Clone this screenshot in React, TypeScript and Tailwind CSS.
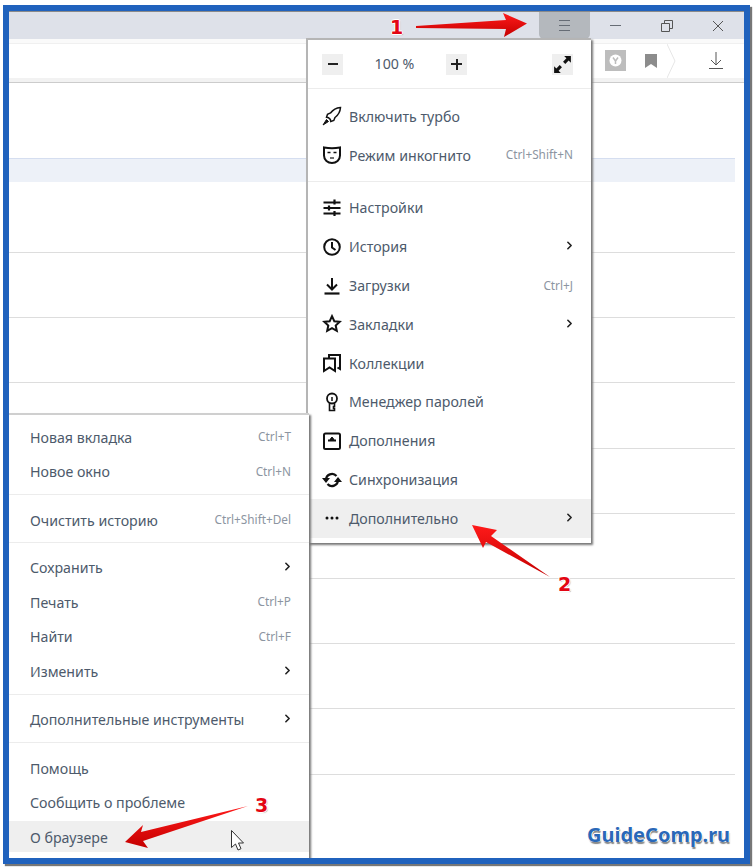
import { ChevronRight } from "lucide-react";
import type { ReactNode } from "react";

type IconProps = { children: ReactNode };

function MenuIcon({ children }: IconProps) {
  return (
    <svg width="20" height="20" viewBox="0 0 20 20" fill="none" stroke="#111" strokeWidth="2" className="shrink-0">
      {children}
    </svg>
  );
}

const mainGroupOne = [
  {
    label: "Включить турбо",
    icon: (
      <MenuIcon>
        <path d="M18.500 1.500c-4 .4-7.500 2.200-10 5.500l-3 1.200-1 3 2 .5 1.800 1.800.5 2 3-1 1.200-3c3.300-2.500 5.200-6 5.500-10z" strokeWidth="1.500" />
        <path d="M4.500 13.500 1 19l5.500-3.500z" fill="#111" strokeWidth="1" />
      </MenuIcon>
    ),
  },
  {
    label: "Режим инкогнито",
    shortcut: "Ctrl+Shift+N",
    icon: (
      <MenuIcon>
        <path d="M2 2.500c5 1 11 1 16 0v8c0 4.500-3.800 7.500-8 7.500s-8-3-8-7.500z" />
        <path d="M5.500 7.500h3M11.500 7.500h3" strokeWidth="1.600" />
        <path d="M8 13h4" strokeWidth="1.200" />
      </MenuIcon>
    ),
  },
];

const mainGroupTwo = [
  {
    label: "Настройки",
    icon: (
      <MenuIcon>
        <path d="M1.500 4.500h17M1.500 10h17M1.500 15.500h17" strokeWidth="1.800" />
        <path d="M12.500 1.500v5M7 7.500v5M12.500 13v5" strokeWidth="2.200" />
      </MenuIcon>
    ),
  },
  {
    label: "История",
    chevron: true,
    icon: (
      <MenuIcon>
        <circle cx="10" cy="10" r="7.800" />
        <path d="M10 5v5.500l3.500 2.500" />
      </MenuIcon>
    ),
  },
  {
    label: "Загрузки",
    shortcut: "Ctrl+J",
    icon: (
      <MenuIcon>
        <path d="M10 2v11M5 8.500l5 5 5-5" />
        <path d="M2.500 17.500h15" strokeWidth="2.200" />
      </MenuIcon>
    ),
  },
  {
    label: "Закладки",
    chevron: true,
    icon: (
      <MenuIcon>
        <path d="m10 2.200 2.300 5 5.400.6-4 3.700 1.100 5.400L10 14.200l-4.800 2.700 1.100-5.400-4-3.700 5.400-.6z" />
      </MenuIcon>
    ),
  },
  {
    label: "Коллекции",
    icon: (
      <MenuIcon>
        <path d="M7 5V2h11v14l-2.500-1.500" strokeWidth="2" />
        <path d="M2 5.500h11V18l-5.500-3.500L2 18z" strokeWidth="2" />
      </MenuIcon>
    ),
  },
  {
    label: "Менеджер паролей",
    icon: (
      <MenuIcon>
        <circle cx="10" cy="6.500" r="5" strokeWidth="1.800" />
        <path d="M7.500 11v7.500h5v-2h-1v-2h1V11" strokeWidth="1.600" />
        <path d="M10 5v4" strokeWidth="1.500" />
      </MenuIcon>
    ),
  },
  {
    label: "Дополнения",
    icon: (
      <MenuIcon>
        <rect x="2" y="2.500" width="16" height="15.500" rx="1.500" />
        <path d="M6 9.500h8" strokeWidth="2" />
        <path d="M8 8.500 10 6l2 2.500z" fill="#111" strokeWidth="1" />
      </MenuIcon>
    ),
  },
  {
    label: "Синхронизация",
    icon: (
      <MenuIcon>
        <path d="M4 10a6 6 0 0 1 10.500-4M16 10a6 6 0 0 1-10.500 4" strokeWidth="2.200" />
        <path d="M0 8h8l-4 5zM20 12h-8l4-5z" fill="#111" stroke="none" />
      </MenuIcon>
    ),
  },
  {
    label: "Дополнительно",
    chevron: true,
    active: true,
    icon: (
      <MenuIcon>
        <circle cx="5" cy="10" r="1.500" fill="#111" stroke="none" />
        <circle cx="10" cy="10" r="1.500" fill="#111" stroke="none" />
        <circle cx="15" cy="10" r="1.500" fill="#111" stroke="none" />
      </MenuIcon>
    ),
  },
];

type MainRowProps = {
  label: string;
  icon: ReactNode;
  shortcut?: string;
  chevron?: boolean;
  active?: boolean;
};

function MainRow({ label, icon, shortcut, chevron, active }: MainRowProps) {
  return (
    <div className={`flex h-[38.8px] items-center pl-[14px] pr-[18px] ${active ? "bg-[#efefef]" : ""}`}>
      {icon}
      <span className="ml-[7px] flex-1 text-[14.2px] text-[#4d5a6b]">{label}</span>
      {shortcut && <span className="text-[11.8px] text-[#8c95a1]">{shortcut}</span>}
      {chevron && <ChevronRight size={13} strokeWidth={3} className="-mr-[3px] mb-[2px] text-[#222]" />}
    </div>
  );
}

type LeftRowProps = {
  label: string;
  shortcut?: string;
  chevron?: boolean;
};

function LeftRow({ label, shortcut, chevron }: LeftRowProps) {
  return (
    <div className="flex h-[34.500px] items-center pl-[21px] pr-[18px]">
      <span className="flex-1 text-[14.2px] text-[#4d5a6b]">{label}</span>
      {shortcut && <span className="text-[11.8px] text-[#8c95a1]">{shortcut}</span>}
      {chevron && <ChevronRight size={13} strokeWidth={3} className="-mr-[3px] mb-[2px] text-[#222]" />}
    </div>
  );
}

function ContentRows() {
  const rows = [0, 1, 2, 3, 4, 5, 6, 7, 8];
  return (
    <div className="flex-1 bg-white pr-[9px]">
      <div className="h-[75px]" />
      <div className="h-[24px] border-t border-[#d5def0] bg-[#edf1f8]" />
      <div className="h-[70px]" />
      {rows.map((row) => (
        <div key={row} className="h-[65.200px] border-t border-[#dddddd]" />
      ))}
    </div>
  );
}

function Annotations() {
  return (
    <svg width="755" height="868" viewBox="0 0 755 868" className="pointer-events-none absolute left-0 top-0">
      <defs>
        <linearGradient id="arrow-red" x1="0" y1="0" x2="0" y2="1">
          <stop offset="0" stopColor="#ff1a1a" />
          <stop offset="1" stopColor="#c40000" />
        </linearGradient>
      </defs>
      <g fill="url(#arrow-red)">
        <path d="M416 26 506 20 503 13 527 23.500 504 37 506 29 416 28z" />
        <path d="M472 525 497 530 491 536 550 577 486 542 483 548z" />
        <path d="M125 842 143 825 141 832 248 806 143 841 148 848z" />
      </g>
      <path d="M231.500 830.500v17l4-3.500 2.500 6 3-1.300-2.500-5.700h5z" fill="#fff" stroke="#333" strokeWidth="1" />
    </svg>
  );
}

const numberClass =
  "absolute font-['DejaVu_Sans',sans-serif] text-[19px] font-bold leading-none text-[#e30613] [text-shadow:-1px_0_0_#fff,1px_0_0_#fff,0_-1px_0_#fff,0_1px_0_#fff,1px_1px_1px_#aaa]";

export default function App() {
  return (
    <div className="relative h-[868px] w-[755px] overflow-hidden bg-white font-['Noto_Sans',sans-serif]">
      <div className="ml-[3px] mt-[5px] h-[859px] w-[747px] border-[6px] border-[#2062bd] shadow-[2px_2px_1px_#777]">
        <div className="relative flex h-full flex-col overflow-hidden">
          <div className="flex h-[28px] justify-end border-t border-[#8a8a8a] bg-[#dee1e9]">
            <div className="flex w-[51px] flex-col items-center justify-center gap-[4px] rounded-b-[5px] bg-[#b4b8bd]">
              <div className="h-px w-[11px] bg-[#666c75]" />
              <div className="h-px w-[11px] bg-[#666c75]" />
              <div className="h-px w-[11px] bg-[#666c75]" />
            </div>
            <div className="flex w-[51px] items-center justify-center">
              <div className="h-px w-[11px] bg-[#666c75]" />
            </div>
            <div className="flex w-[51px] items-center justify-center">
              <svg width="12" height="12" viewBox="0 0 12 12" fill="none" stroke="#555">
                <path d="M.5 3.500h8v8h-8zM3.500 3.500v-3h8v8h-3" />
              </svg>
            </div>
            <div className="flex w-[52px] items-center justify-center">
              <svg width="12" height="12" viewBox="0 0 12 12" fill="none" stroke="#555">
                <path d="m1 1 10 10M11 1 1 11" />
              </svg>
            </div>
          </div>

          <div className="flex h-[44px] flex-col bg-white">
            <div className="h-[5px] border-b border-[#f0f0f0] bg-[#fafafa]" />
            <div className="relative flex flex-1 items-center justify-end pr-[21px]">
              <div className="mr-[19px] flex size-[21px] items-center justify-center bg-[#bdbdbd]">
                <svg width="13" height="13" viewBox="0 0 13 13">
                  <circle cx="6.500" cy="6.500" r="6" fill="#fff" />
                  <path d="M4 3.500 6.500 7v3M9 3.500 6.500 7" fill="none" stroke="#bdbdbd" strokeWidth="1.500" />
                </svg>
              </div>
              <svg width="12" height="14" viewBox="0 0 12 14" className="mr-[10px]">
                <path d="M0 0h12v14L6 10l-6 4z" fill="#8c8c8c" />
              </svg>
              <svg width="9" height="34" viewBox="0 0 9 34" fill="none" stroke="#e6e6e6" className="mr-[33px]">
                <path d="m0 0 8 17-8 17" />
              </svg>
              <svg width="14" height="18" viewBox="0 0 14 18" fill="none" stroke="#555">
                <path d="M7 0v13M2 8l5 5 5-5M0 16.500h14" />
              </svg>
            </div>
            <div className="h-[6px] border-b border-[#cccccc] bg-[#f2f2f2]" />
          </div>

          <ContentRows />

          <div className="absolute left-[297px] top-[27px] h-[505px] w-[285px] border-l-2 border-t-2 border-[#b5b5b5] bg-white shadow-[2px_2px_2px_#777]">
            <div className="flex h-[49px] items-center border-b border-[#ececec] pl-[14px] pr-[18px]">
              <button className="flex h-[21px] w-[21px] items-center justify-center bg-[#efefef]">
                <div className="h-[2px] w-[10px] bg-[#222]" />
              </button>
              <span className="w-[103px] text-center text-[14.2px] text-[#4d5a6b]">100 %</span>
              <button className="relative flex h-[21px] w-[21px] items-center justify-center bg-[#efefef]">
                <div className="h-[2px] w-[11px] bg-[#222]" />
                <div className="absolute h-[11px] w-[2px] bg-[#222]" />
              </button>
              <div className="flex-1" />
              <button className="flex h-[21px] w-[21px] items-center justify-center bg-[#efefef]">
                <svg width="19" height="19" viewBox="0 0 17 17" fill="#111">
                  <path d="M10 1h6v6l-2-2-3 3-2-2 3-3zM7 16H1v-6l2 2 3-3 2 2-3 3z" />
                </svg>
              </button>
            </div>
            <div className="pb-[6px] pt-[8px]">
              {mainGroupOne.map((item) => (
                <MainRow key={item.label} {...item} />
              ))}
            </div>
            <div className="border-t border-[#ececec] pt-[7px]">
              {mainGroupTwo.map((item) => (
                <MainRow key={item.label} {...item} />
              ))}
            </div>
          </div>

          <div className="absolute left-0 top-[402px] h-[445px] w-[300px] border-t-2 border-[#cfcfcf] bg-white shadow-[2px_2px_2px_#777]">
            <div className="pb-[5px] pt-[5px]">
              <LeftRow label="Новая вкладка" shortcut="Ctrl+T" />
              <LeftRow label="Новое окно" shortcut="Ctrl+N" />
            </div>
            <div className="border-t border-[#ececec] pb-[4px] pt-[8px]">
              <LeftRow label="Очистить историю" shortcut="Ctrl+Shift+Del" />
            </div>
            <div className="border-t border-[#ececec] pb-[5px] pt-[8px]">
              <LeftRow label="Сохранить" chevron />
              <LeftRow label="Печать" shortcut="Ctrl+P" />
              <LeftRow label="Найти" shortcut="Ctrl+F" />
              <LeftRow label="Изменить" chevron />
            </div>
            <div className="border-t border-[#ececec] pb-[5px] pt-[8px]">
              <LeftRow label="Дополнительные инструменты" chevron />
            </div>
            <div className="border-t border-[#ececec] pt-[8px]">
              <LeftRow label="Помощь" />
              <LeftRow label="Сообщить о проблеме" />
              <div className="mt-[1px] flex h-[31px] items-center bg-[#efefef] pl-[21px] pt-[2px]">
                <span className="text-[14.2px] text-[#4d5a6b]">О браузере</span>
              </div>
            </div>
          </div>
        </div>
      </div>

      <Annotations />
      <span className={`${numberClass} left-[390px] top-[18px]`}>1</span>
      <span className={`${numberClass} left-[558px] top-[575px]`}>2</span>
      <span className={`${numberClass} left-[255px] top-[796px]`}>3</span>
      <span className="absolute left-[587px] top-[822px] text-[20px] font-bold leading-[26px] text-[#2a68b8] [text-shadow:-1px_0_0_#fff,1px_0_0_#fff,0_-1px_0_#fff,1px_2px_1px_#888]">
        GuideComp.ru
      </span>
    </div>
  );
}
